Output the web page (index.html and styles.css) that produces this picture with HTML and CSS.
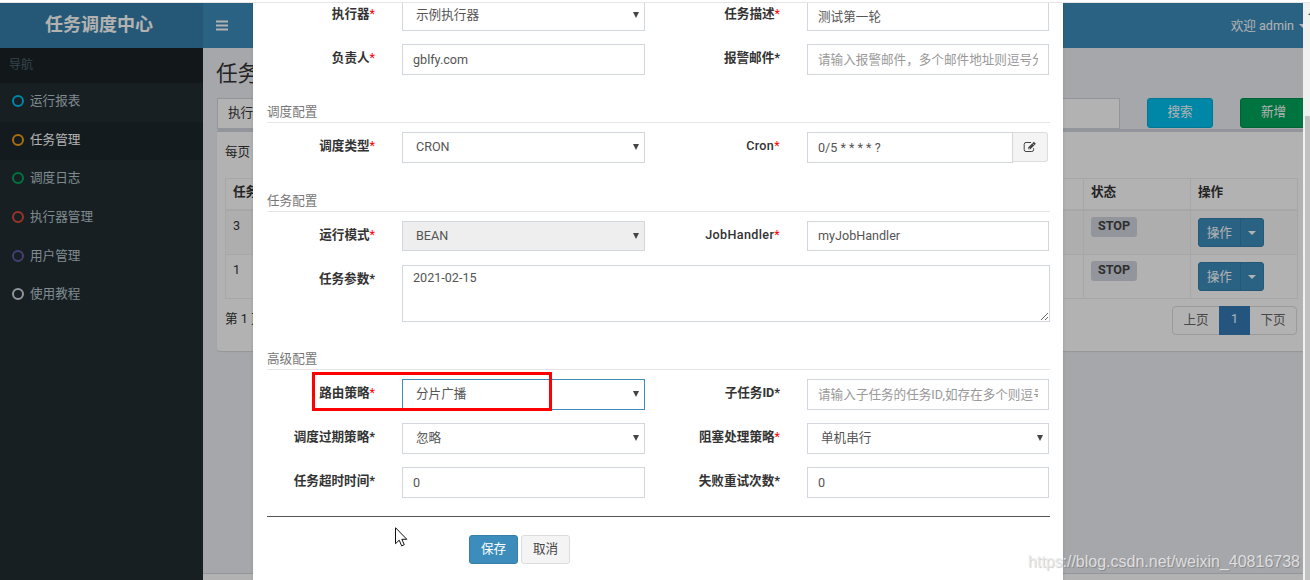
FILE: index.html
```html
<!DOCTYPE html>
<html lang="zh-CN">
<head>
<meta charset="UTF-8">
<title>任务调度中心</title>
<link rel="stylesheet" href="styles.css">
</head>
<body>
<div class="top-edge"></div>
<div class="window">
    <div class="wrapper">
        <header class="main-header">
            <div class="logo">任务调度中心</div>
            <nav class="navbar">
                <svg class="bars" width="12" height="11" viewBox="0 0 12 11"><path d="M0 1.5h12M0 5.5h12M0 9.5h12" stroke="#fff" stroke-width="2"/></svg>
                <span class="user">欢迎 admin <i class="caret"></i></span>
            </nav>
        </header>
        <div class="main">
            <aside class="sidebar">
                <div class="nav-title">导航</div>
                <ul class="menu">
                    <li><i class="circle aqua"></i>运行报表</li>
                    <li class="active"><i class="circle yellow"></i>任务管理</li>
                    <li><i class="circle green"></i>调度日志</li>
                    <li><i class="circle red"></i>执行器管理</li>
                    <li><i class="circle purple"></i>用户管理</li>
                    <li><i class="circle gray"></i>使用教程</li>
                </ul>
            </aside>
            <div class="content">
                <h1>任务管理</h1>
                <div class="filters">
                    <div class="filter-input"><span>执行器</span></div>
                    <button class="btn btn-info">搜索</button>
                    <button class="btn btn-success">新增</button>
                </div>
                <div class="box">
                    <div class="per-page">每页</div>
                    <table class="job-table">
                        <thead>
                            <tr><th>任务ID</th><th class="col-status">状态</th><th class="col-action">操作</th></tr>
                        </thead>
                        <tbody>
                            <tr class="odd">
                                <td>3</td>
                                <td><span class="label-stop">STOP</span></td>
                                <td><div class="btn-group"><span>操作</span><span class="toggle"><i class="caret"></i></span></div></td>
                            </tr>
                            <tr>
                                <td>1</td>
                                <td><span class="label-stop">STOP</span></td>
                                <td><div class="btn-group"><span>操作</span><span class="toggle"><i class="caret"></i></span></div></td>
                            </tr>
                        </tbody>
                    </table>
                    <div class="table-foot">
                        <span class="page-info">第 1 页</span>
                        <div class="pagination"><span>上页</span><span class="current">1</span><span>下页</span></div>
                    </div>
                </div>
                <footer class="main-footer"></footer>
            </div>
        </div>

        <div class="backdrop"></div>

        <form class="modal">
            <div class="row">
                <label>执行器<b>*</b></label>
                <div class="select"><select><option>示例执行器</option></select></div>
                <label>任务描述<b>*</b></label>
                <input type="text" value="测试第一轮">
            </div>
            <div class="row">
                <label>负责人<b>*</b></label>
                <input type="text" value="gblfy.com">
                <label>报警邮件*</label>
                <input type="text" placeholder="请输入报警邮件，多个邮件地址则逗号分隔">
            </div>

            <div class="section">调度配置</div>
            <div class="row row-cron">
                <label>调度类型<b>*</b></label>
                <div class="select"><select><option>CRON</option></select></div>
                <label class="latin">Cron<b>*</b></label>
                <div class="input-group">
                    <input type="text" value="0/5 * * * * ?">
                    <span class="edit">
                        <svg width="14" height="12" viewBox="0 0 14 12" fill="none" stroke="#444"><path d="M8 1.5H3A1.8 1.8 0 0 0 1.2 3.3v5.4A1.8 1.8 0 0 0 3 10.500h5.800a1.800 1.800 0 0 0 1.800-1.800V7.200"/><path d="M5.300 8.300V6.200L10.800.7l2.100 2.100-5.500 5.500z" fill="#444" stroke="none"/><path d="M6 7l1 1M9.500 2.500l1.800 1.800" stroke="#f4f4f4" stroke-width=".6"/></svg>
                    </span>
                </div>
            </div>

            <div class="section">任务配置</div>
            <div class="row row-short">
                <label>运行模式<b>*</b></label>
                <div class="select"><select disabled><option>BEAN</option></select></div>
                <label class="latin">JobHandler<b>*</b></label>
                <input type="text" value="myJobHandler">
            </div>
            <div class="row row-param">
                <label>任务参数*</label>
                <textarea>2021-02-15</textarea>
            </div>

            <div class="section">高级配置</div>
            <div class="row">
                <label>路由策略<b>*</b></label>
                <div class="select focused"><select><option>分片广播</option></select></div>
                <label>子任务ID*</label>
                <input type="text" placeholder="请输入子任务的任务ID,如存在多个则逗号分隔">
            </div>
            <div class="row">
                <label>调度过期策略*</label>
                <div class="select"><select><option>忽略</option></select></div>
                <label>阻塞处理策略<b>*</b></label>
                <div class="select"><select><option>单机串行</option></select></div>
            </div>
            <div class="row">
                <label>任务超时时间*</label>
                <input type="text" value="0">
                <label>失败重试次数*</label>
                <input type="text" value="0">
            </div>
            <hr>
            <div class="buttons">
                <button type="button" class="btn btn-primary">保存</button>
                <button type="button" class="btn btn-default">取消</button>
            </div>
        </form>
    </div>
    <div class="scrollbar">
        <i class="scroll-up"></i>
        <div class="thumb"></div>
    </div>
</div>

<div class="highlight"></div>
<svg class="cursor" width="13" height="20" viewBox="0 0 13 20"><path d="M.5.700v16l3.700-3.500 2.500 5.700 2.600-1.200-2.500-5.400h5z" fill="#fff" stroke="#111"/></svg>
<div class="watermark">https://blog.csdn.net/weixin_40816738</div>
</body>
</html>
```
FILE: styles.css
```css
* {
    box-sizing: border-box;
}
body {
    margin: 0;
    width: 1310px;
    height: 580px;
    overflow: hidden;
    position: relative;
    background: #fff;
    color: #333;
    font-family: Roboto, "Noto Sans CJK SC", sans-serif;
    font-size: 12.6px;
    line-height: 18px;
}
input, select, textarea, button {
    font-family: inherit;
    font-size: inherit;
    line-height: 18px;
}
.top-edge {
    height: 3px;
    border-bottom: 1px solid #e5e5e5;
}
.window {
    display: flex;
    height: 577px;
}
.wrapper {
    position: relative;
    display: flex;
    flex-direction: column;
    width: 1303px;
    overflow: hidden;
}

/* header */
.main-header {
    display: flex;
    height: 45px;
    color: #fff;
}
.logo {
    width: 203px;
    padding-right: 5px;
    background: #367fa9;
    font-size: 18px;
    font-weight: bold;
    line-height: 44px;
    text-align: center;
}
.navbar {
    flex: 1;
    display: flex;
    align-items: center;
    justify-content: space-between;
    padding-left: 13px;
    background: #3c8dbc;
}
.user {
    display: flex;
    align-items: center;
    gap: 5px;
    margin-right: -4px;
}
.caret {
    display: inline-block;
    border: 4px solid transparent;
    border-top-color: #fff;
    border-bottom: 0;
}

/* sidebar */
.main {
    flex: 1;
    display: flex;
    min-height: 0;
}
.sidebar {
    width: 203px;
    background: #222d32;
    color: #b8c7ce;
}
.nav-title {
    height: 35px;
    padding-left: 9px;
    background: #1a2226;
    color: #4b646f;
    font-size: 12px;
    line-height: 34px;
}
.menu {
    margin: 0;
    padding: 0;
    list-style: none;
}
.menu li {
    display: flex;
    align-items: center;
    height: 38.6px;
    padding: 0 0 2px 12px;
}
.menu .active {
    background: #1e282c;
    color: #fff;
}
.circle {
    width: 12px;
    height: 12px;
    margin-right: 6px;
    border: 2px solid;
    border-radius: 50%;
}
.aqua { border-color: #00c0ef; }
.yellow { border-color: #f39c12; }
.green { border-color: #00a65a; }
.red { border-color: #dd4b39; }
.purple { border-color: #605ca8; }
.gray { border-color: #d2d6de; }

/* content */
.content {
    flex: 1;
    display: flex;
    flex-direction: column;
    min-width: 0;
    padding-top: 13px;
    background: #ecf0f5;
}
h1 {
    margin: 0 0 11px 13px;
    font-size: 21.6px;
    font-weight: normal;
    line-height: 26px;
}
.filters {
    display: flex;
    width: 1120px;
    margin-left: 14px;
}
.filter-input {
    width: 903px;
    height: 31px;
    padding: 5px 10px;
    background: #fff;
    border: 1px solid #d2d6de;
}
.btn {
    height: 30px;
    padding: 0 0 2px;
    border: 1px solid;
    border-radius: 3px;
    color: #fff;
}
.btn-info {
    width: 66px;
    margin: 0 27px;
    background: #00c0ef;
    border-color: #00acd6;
}
.btn-success {
    width: 67px;
    background: #00a65a;
    border-color: #008d4c;
}
.box {
    width: 1092px;
    height: 222px;
    margin-left: 14px;
    padding: 11px 0 0 8px;
    background: #fff;
    border-top: 3px solid #d2d6de;
    border-radius: 3px;
    box-shadow: 0 1px 1px rgba(0, 0, 0, .1);
}
.per-page {
    height: 35px;
}
.job-table {
    width: 1073px;
    table-layout: fixed;
    border-collapse: collapse;
}
.job-table th, .job-table td {
    padding: 6px 7px;
    border: 1px solid #f0f0f0;
    text-align: left;
    vertical-align: top;
}
.job-table th {
    height: 31px;
    padding: 4px 7px;
    border-bottom-width: 2px;
}
.job-table td {
    height: 44px;
}
.job-table .odd td {
    height: 45px;
}
.col-status, .col-action {
    width: 107px;
}
.odd {
    background: #f9f9f9;
}
.label-stop {
    display: block;
    width: 46px;
    height: 20px;
    background: #d2d6de;
    border-radius: 3px;
    color: #444;
    font-weight: bold;
    line-height: 18px;
    text-align: center;
}
.btn-group {
    display: flex;
    width: 66px;
    height: 29px;
    margin-top: 1px;
    background: #3c8dbc;
    border: 1px solid #367fa9;
    border-radius: 3px;
    color: #fff;
    line-height: 27px;
}
.btn-group span {
    width: 42px;
    text-align: center;
}
.btn-group .toggle {
    width: 24px;
    border-left: 1px solid #367fa9;
    line-height: 24px;
}
.table-foot {
    display: flex;
    justify-content: space-between;
    width: 1072px;
    padding-top: 7px;
}
.page-info {
    padding-top: 4px;
}
.pagination {
    display: flex;
    height: 29px;
    border: 1px solid #ddd;
    border-radius: 4px;
    color: #666;
    line-height: 26px;
}
.pagination span {
    width: 46px;
    text-align: center;
}
.pagination .current {
    width: 31px;
    margin: -1px 0;
    background: #337ab7;
    color: #fff;
}
.main-footer {
    height: 7px;
    margin-top: auto;
    background: #fff;
    border-top: 1px solid #d2d6de;
}

/* modal */
.backdrop {
    position: absolute;
    inset: 0;
    background: rgba(0, 0, 0, .3);
}
.modal {
    position: absolute;
    top: -3px;
    left: 253px;
    width: 810px;
    height: 583px;
    padding: 0 13px 0 14px;
    background: #fff;
    box-shadow: 0 2px 3px rgba(0, 0, 0, .125);
}
.row {
    display: grid;
    grid-template-columns: 108px 243px 108px 242px;
    column-gap: 27px;
    height: 44px;
    align-items: start;
}
.row label {
    padding-top: 5px;
    font-weight: bold;
    text-align: right;
    white-space: nowrap;
}
.row label b {
    color: red;
    font-weight: normal;
}
.row .latin {
    font-weight: 500;
    letter-spacing: .35px;
}
.row-cron {
    height: 45px;
}
.row input, .row select, .row textarea {
    display: block;
    width: 100%;
    height: 31px;
    margin: 0;
    padding: 5px 10px 6px;
    background: #fff;
    border: 1px solid #d2d6de;
    border-radius: 0;
    color: #555;
    outline: 0;
}
.row select {
    padding-left: 13px;
    appearance: none;
    opacity: 1;
}
.row select:disabled {
    background: #eee;
}
.row ::placeholder {
    color: #999;
}
.row-short input, .row-short select {
    height: 30px;
}
.select {
    position: relative;
}
.select::after {
    content: "";
    position: absolute;
    top: 12px;
    right: 6px;
    border: 3px solid transparent;
    border-top: 6px solid #444;
    border-bottom: 0;
}
.focused select {
    border-color: #3c8dbc;
}
.input-group {
    display: flex;
}
.input-group input {
    width: 206px;
}
.edit {
    display: flex;
    align-items: center;
    justify-content: center;
    width: 35px;
    height: 30px;
    background: #f4f4f4;
    border: 1px solid #ddd;
    border-left: 0;
    border-radius: 0 3px 3px 0;
}
.row-param {
    grid-template-columns: 108px 648px;
    height: 70px;
}
.row-param textarea {
    height: 57px;
    padding-top: 3px;
}
.section {
    height: 35px;
    margin-bottom: 9px;
    padding-top: 15px;
    border-bottom: 1px solid #e5e5e5;
    color: #777;
}
hr {
    height: 1px;
    margin: 5px 0 18px;
    border: 0;
    background: #555;
}
.buttons {
    display: flex;
    gap: 3px;
    padding-left: 202px;
}
.buttons .btn {
    width: 49px;
    height: 29px;
}
.btn-primary {
    background: #3c8dbc;
    border-color: #367fa9;
}
.btn-default {
    background: #f4f4f4;
    border-color: #ddd;
    color: #444;
}

/* scrollbar */
.scrollbar {
    flex: 1;
    padding-left: 2px;
    background: #f1f1f1;
    overflow: hidden;
}
.scroll-up {
    display: block;
    width: 8px;
    height: 113px;
    padding: 8px 0 0 3px;
}
.scroll-up::before {
    content: "";
    display: block;
    width: 8px;
    border: 4px solid transparent;
    border-top: 0;
    border-bottom-color: #505050;
}
.thumb {
    height: 464px;
    background: #c1c1c1;
}

.highlight {
    position: absolute;
    top: 372px;
    left: 312px;
    width: 240px;
    height: 39px;
    border: 3px solid red;
}
.cursor {
    position: absolute;
    top: 527px;
    left: 395px;
}
.watermark {
    position: absolute;
    right: 10px;
    bottom: 9px;
    color: rgba(235, 235, 235, .85);
    font: 16px "Liberation Sans", sans-serif;
    text-shadow: 1px 1px 1px rgba(0, 0, 0, .2);
}
```
